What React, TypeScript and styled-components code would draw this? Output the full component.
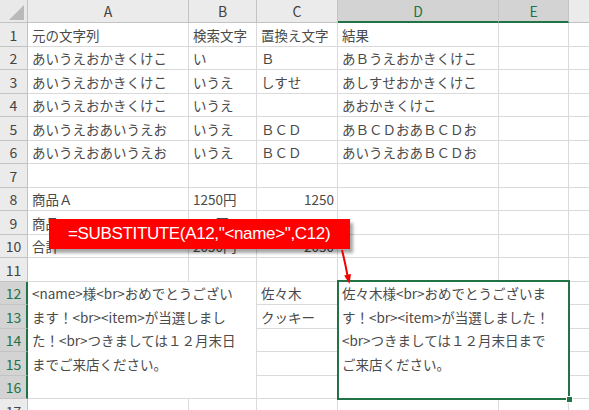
import React from "react";
import styled, { createGlobalStyle, css } from "styled-components";

const GlobalStyle = createGlobalStyle`
  html, body { margin: 0; padding: 0; background: #fff; overflow: hidden; }
  body { width: 589px; height: 410px; }
`;

const COLS = [28, 161, 68, 81, 161, 70, 60];
const ROWS = [23, ...Array.from({ length: 17 }, (_, i) => (i % 2 === 0 ? 24 : 23))];
const LETTERS = ["A", "B", "C", "D", "E", "F"];
const GRID = "#dadada";
const HEAD_LINE = "#c3c3c3";
const GREEN = "#217346";

const Sheet = styled.div`
  position: relative;
  width: 589px;
  height: 410px;
  overflow: hidden;
  display: grid;
  grid-template-columns: ${COLS.map((c) => `${c}px`).join(" ")};
  grid-template-rows: ${ROWS.map((r) => `${r}px`).join(" ")};
  font-family: "Noto Sans CJK JP", "Noto Sans", sans-serif;
  background: #fff;
`;

const Corner = styled.div`
  grid-column: 1;
  grid-row: 1;
  background: #e9e9e9;
  border-right: 1px solid ${HEAD_LINE};
  border-bottom: 1px solid ${HEAD_LINE};
  box-sizing: border-box;
  display: flex;
  align-items: flex-end;
  justify-content: flex-end;
  padding: 0 2px 1px 0;
`;

const ColHeader = styled.div<{ $col: number; $selected?: boolean }>`
  grid-column: ${(p) => p.$col};
  grid-row: 1;
  box-sizing: border-box;
  display: flex;
  align-items: center;
  justify-content: center;
  font-size: 14px;
  padding-bottom: 1px;
  color: #444;
  background: #ebebeb;
  border-right: 1px solid ${HEAD_LINE};
  border-bottom: 1px solid ${HEAD_LINE};
  ${(p) =>
    p.$selected &&
    css`
      background: #d3d3d3;
      color: ${GREEN};
      border-bottom: 2px solid ${GREEN};
      padding-bottom: 0;
    `}
`;

const RowHeader = styled.div<{ $row: number; $selected?: boolean }>`
  grid-column: 1;
  grid-row: ${(p) => p.$row};
  box-sizing: border-box;
  display: flex;
  align-items: center;
  justify-content: center;
  font-size: 14px;
  color: #444;
  background: #ebebeb;
  border-right: 1px solid ${HEAD_LINE};
  border-bottom: 1px solid ${HEAD_LINE};
  ${(p) =>
    p.$selected &&
    css`
      background: #d3d3d3;
      color: ${GREEN};
      border-right: 2px solid ${GREEN};
      padding-left: 1px;
    `}
`;

const Cell = styled.div<{
  $col: number;
  $row: number;
  $colSpan?: number;
  $rowSpan?: number;
  $align?: "left" | "right";
}>`
  grid-column: ${(p) => `${p.$col} / span ${p.$colSpan ?? 1}`};
  grid-row: ${(p) => `${p.$row} / span ${p.$rowSpan ?? 1}`};
  box-sizing: border-box;
  border-right: 1px solid ${GRID};
  border-bottom: 1px solid ${GRID};
  display: flex;
  align-items: center;
  justify-content: ${(p) => (p.$align === "right" ? "flex-end" : "flex-start")};
  padding: 0 3px 0 4px;
  font-size: 13.5px;
  color: #4a4a4a;
  white-space: nowrap;
  min-width: 0;
`;

const WrapCell = styled(Cell)<{ $selected?: boolean }>`
  display: block;
  white-space: pre;
  line-height: 23.5px;
  padding-top: 0;
  position: relative;
  ${(p) =>
    p.$selected &&
    css`
      &::after {
        content: "";
        position: absolute;
        left: -1px;
        top: -2px;
        right: -2px;
        bottom: -2px;
        border: 2px solid ${GREEN};
        pointer-events: none;
      }
    `}
`;

const FillHandle = styled.span`
  position: absolute;
  right: -5px;
  bottom: -5px;
  width: 5px;
  height: 5px;
  background: ${GREEN};
  border: 1px solid #fff;
  z-index: 2;
`;

const Callout = styled.div`
  position: absolute;
  left: 49px;
  top: 219px;
  width: 301px;
  height: 30px;
  box-sizing: border-box;
  background: #ff0000;
  color: #fff;
  font-family: "Liberation Sans", Arial, sans-serif;
  font-size: 17px;
  letter-spacing: -0.35px;
  display: flex;
  align-items: center;
  padding: 0 0 1px 19px;
  box-shadow: 3px 4px 3px rgba(0, 0, 0, 0.35);
  white-space: nowrap;
  z-index: 5;
`;

const Overlay = styled.svg`
  position: absolute;
  left: 0;
  top: 0;
  width: 589px;
  height: 410px;
  pointer-events: none;
  z-index: 6;
`;

type CellData = { c: number; r: number; t: string; align?: "left" | "right" };

const data: CellData[] = [
  { r: 1, c: 1, t: "元の文字列" },
  { r: 1, c: 2, t: "検索文字" },
  { r: 1, c: 3, t: "置換え文字" },
  { r: 1, c: 4, t: "結果" },
  { r: 2, c: 1, t: "あいうえおかきくけこ" },
  { r: 2, c: 2, t: "い" },
  { r: 2, c: 3, t: "Ｂ" },
  { r: 2, c: 4, t: "あＢうえおかきくけこ" },
  { r: 3, c: 1, t: "あいうえおかきくけこ" },
  { r: 3, c: 2, t: "いうえ" },
  { r: 3, c: 3, t: "しすせ" },
  { r: 3, c: 4, t: "あしすせおかきくけこ" },
  { r: 4, c: 1, t: "あいうえおかきくけこ" },
  { r: 4, c: 2, t: "いうえ" },
  { r: 4, c: 4, t: "あおかきくけこ" },
  { r: 5, c: 1, t: "あいうえおあいうえお" },
  { r: 5, c: 2, t: "いうえ" },
  { r: 5, c: 3, t: "ＢＣＤ" },
  { r: 5, c: 4, t: "あＢＣＤおあＢＣＤお" },
  { r: 6, c: 1, t: "あいうえおあいうえお" },
  { r: 6, c: 2, t: "いうえ" },
  { r: 6, c: 3, t: "ＢＣＤ" },
  { r: 6, c: 4, t: "あいうえおあＢＣＤお" },
  { r: 8, c: 1, t: "商品Ａ" },
  { r: 8, c: 2, t: "1250円" },
  { r: 8, c: 3, t: "1250", align: "right" },
  { r: 9, c: 1, t: "商品Ｂ" },
  { r: 9, c: 2, t: "800円" },
  { r: 9, c: 3, t: "800", align: "right" },
  { r: 10, c: 1, t: "合計" },
  { r: 10, c: 2, t: "2050円" },
  { r: 10, c: 3, t: "2050", align: "right" },
  { r: 12, c: 3, t: "佐々木" },
  { r: 13, c: 3, t: "クッキー" },
];

const mergedA =
  "<name>様<br>おめでとうござい\nます！<br><item>が当選しまし\nた！<br>つきましては１２月末日\nまでご来店ください。";
const mergedD =
  "佐々木様<br>おめでとうございま\nす！<br><item>が当選しました！\n<br>つきましては１２月末日まで\nご来店ください。";

const inMerge = (r: number, c: number) =>
  r >= 12 && r <= 16 && (c === 1 || c === 2 || c === 4 || c === 5);

export default function App() {
  const cells: React.ReactNode[] = [];
  for (let r = 1; r <= 17; r++) {
    for (let c = 1; c <= 6; c++) {
      if (inMerge(r, c)) continue;
      const d = data.find((x) => x.r === r && x.c === c);
      cells.push(
        <Cell key={`${r}-${c}`} $row={r + 1} $col={c + 1} $align={d?.align}>
          {d?.t ?? ""}
        </Cell>
      );
    }
  }

  return (
    <>
      <GlobalStyle />
      <Sheet>
        <Corner>
          <svg width="16" height="16" viewBox="0 0 16 16">
            <polygon points="15,0 15,15 0,15" fill="#b9b9b9" />
          </svg>
        </Corner>
        {LETTERS.map((l, i) => (
          <ColHeader key={l} $col={i + 2} $selected={l === "D" || l === "E"}>
            {l}
          </ColHeader>
        ))}
        {Array.from({ length: 17 }, (_, i) => (
          <RowHeader key={i} $row={i + 2} $selected={i + 1 >= 12 && i + 1 <= 16}>
            {i + 1}
          </RowHeader>
        ))}
        {cells}
        <WrapCell $row={13} $col={2} $colSpan={2} $rowSpan={5}>
          {mergedA}
        </WrapCell>
        <WrapCell $row={13} $col={5} $colSpan={2} $rowSpan={5} $selected>
          {mergedD}
          <FillHandle />
        </WrapCell>
        <Callout>=SUBSTITUTE(A12,"&lt;name&gt;",C12)</Callout>
        <Overlay viewBox="0 0 589 410">
          <path d="M342 250 Q345 262 347.6 276" stroke="#f00000" strokeWidth="2" fill="none" />
          <polygon points="349.5,284 344.2,275.4 351,274" fill="#f00000" />
        </Overlay>
      </Sheet>
    </>
  );
}
